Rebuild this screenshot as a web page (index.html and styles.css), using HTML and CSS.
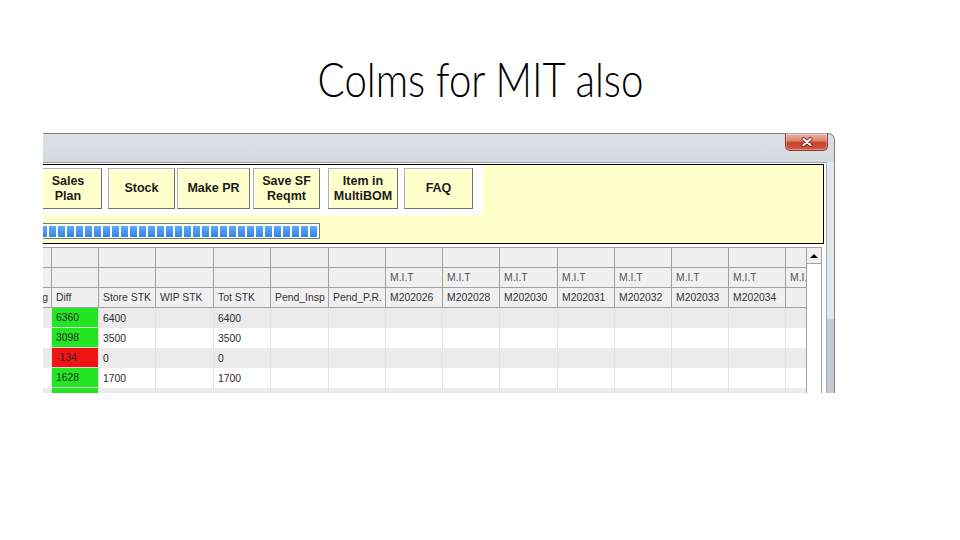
FILE: index.html
```html
<!DOCTYPE html>
<html>
<head>
<meta charset="utf-8">
<title>Colms for MIT also</title>
<link rel="stylesheet" href="styles.css">
</head>
<body>
<div class="slide">
  <h1 class="title"><span class="title-text">Colms for MIT also</span></h1>
  <div class="shot">
    <div class="titlebar">
      <div class="close">
        <svg width="14" height="10" viewBox="0 0 14 10"><path d="M3.5 2 L10.5 8 M10.5 2 L3.5 8" stroke="#7a2a1c" stroke-width="3.8" stroke-linecap="round"/><path d="M3.5 2 L10.5 8 M10.5 2 L3.5 8" stroke="#ffffff" stroke-width="2.1" stroke-linecap="round"/></svg>
      </div>
    </div>
    <div class="winbody">
      <div class="client">
        <div class="panel">
          <div class="btnrow">
            <div class="btn b-sales">Sales<br>Plan</div>
            <div class="btn b-stock">Stock</div>
            <div class="btn b-pr">Make PR</div>
            <div class="btn b-save">Save SF<br>Reqmt</div>
            <div class="btn b-item">Item in<br>MultiBOM</div>
            <div class="btn b-faq">FAQ</div>
          </div>
          <div class="progress">
            <span class="seg"></span><span class="seg"></span><span class="seg"></span><span class="seg"></span><span class="seg"></span>
            <span class="seg"></span><span class="seg"></span><span class="seg"></span><span class="seg"></span><span class="seg"></span>
            <span class="seg"></span><span class="seg"></span><span class="seg"></span><span class="seg"></span><span class="seg"></span>
            <span class="seg"></span><span class="seg"></span><span class="seg"></span><span class="seg"></span><span class="seg"></span>
            <span class="seg"></span><span class="seg"></span><span class="seg"></span><span class="seg"></span><span class="seg"></span>
            <span class="seg"></span><span class="seg"></span><span class="seg"></span><span class="seg"></span><span class="seg"></span>
            <span class="seg"></span>
          </div>
        </div>
        <div class="gridwrap">
          <div class="grid">
            <table>
              <colgroup>
                <col class="w57"><col class="w47"><col class="w57"><col class="w58"><col class="w57"><col class="w58"><col class="w57"><col class="w57"><col class="w57"><col class="w58"><col class="w57"><col class="w57"><col class="w57"><col class="w57"><col class="w57">
              </colgroup>
              <tr class="hd"><td></td><td></td><td></td><td></td><td></td><td></td><td></td><td></td><td></td><td></td><td></td><td></td><td></td><td></td><td></td></tr>
              <tr class="hd"><td></td><td></td><td></td><td></td><td></td><td></td><td></td><td class="mit">M.I.T</td><td class="mit">M.I.T</td><td class="mit">M.I.T</td><td class="mit">M.I.T</td><td class="mit">M.I.T</td><td class="mit">M.I.T</td><td class="mit">M.I.T</td><td class="mit">M.I.T</td></tr>
              <tr class="hd"><td class="lead">Avg</td><td>Diff</td><td>Store STK</td><td>WIP STK</td><td>Tot STK</td><td>Pend_Insp</td><td>Pend_P.R.</td><td>M202026</td><td>M202028</td><td>M202030</td><td>M202031</td><td>M202032</td><td>M202033</td><td>M202034</td><td></td></tr>
              <tr class="alt"><td></td><td class="pos">6360</td><td>6400</td><td></td><td>6400</td><td></td><td></td><td></td><td></td><td></td><td></td><td></td><td></td><td></td><td></td></tr>
              <tr><td></td><td class="pos">3098</td><td>3500</td><td></td><td>3500</td><td></td><td></td><td></td><td></td><td></td><td></td><td></td><td></td><td></td><td></td></tr>
              <tr class="alt"><td></td><td class="neg">-134</td><td>0</td><td></td><td>0</td><td></td><td></td><td></td><td></td><td></td><td></td><td></td><td></td><td></td><td></td></tr>
              <tr><td></td><td class="pos">1628</td><td>1700</td><td></td><td>1700</td><td></td><td></td><td></td><td></td><td></td><td></td><td></td><td></td><td></td><td></td></tr>
              <tr class="alt"><td></td><td class="pos">506</td><td>540</td><td></td><td>540</td><td></td><td></td><td></td><td></td><td></td><td></td><td></td><td></td><td></td><td></td></tr>
            </table>
          </div>
          <div class="vscroll"><div class="vs-up"></div></div>
        </div>
      </div>
      <div class="frame"></div>
    </div>
  </div>
</div>
</body>
</html>
```

FILE: styles.css
```css
* { box-sizing: border-box; }
html, body { margin: 0; padding: 0; background: #fff; }
body {
  width: 960px;
  height: 540px;
  overflow: hidden;
  font-family: "Liberation Sans", Arial, sans-serif;
}

.slide {
  display: flex;
  flex-direction: column;
  height: 540px;
}

/* ---------- slide title ---------- */
.title {
  margin: 0;
  height: 133px;
  padding-top: 51px;
  text-align: center;
  font-family: Lato, "Open Sans", sans-serif;
  font-weight: 300;
  font-size: 47px;
  line-height: 56px;
  color: #000;
}
.title-text {
  display: inline-block;
  transform: scaleX(0.855);
  transform-origin: 50% 50%;
}

/* ---------- window screenshot ---------- */
.shot {
  margin-left: 43px;
  width: 792px;
  height: 260px;
  overflow: hidden;
  display: flex;
  flex-direction: column;
  background: #fff;
}

.titlebar {
  flex: none;
  height: 29px;
  border-top: 1px solid #7b8087;
  border-right: 1px solid #7b8087;
  border-top-right-radius: 7px;
  background: linear-gradient(#dce0e6, #d5dae1);
  display: flex;
  justify-content: flex-end;
  align-items: flex-start;
  padding-right: 6px;
}
.close {
  width: 43px;
  height: 18px;
  margin-top: -1px;
  border: 1px solid #8d3526;
  border-top-color: #a8a8a8;
  border-radius: 0 0 5px 5px;
  background: linear-gradient(#e9b1a3 0%, #dc8571 40%, #c5432d 55%, #cd5b43 100%);
  box-shadow: inset 0 0 0 1px rgba(255, 255, 255, 0.35);
  display: flex;
  align-items: center;
  justify-content: center;
}

.winbody {
  flex: 1;
  min-height: 0;
  display: flex;
}

.client {
  width: 783px;
  flex: none;
  display: flex;
  flex-direction: column;
  border-top: 1px solid #9aa0a6;
  padding-top: 1px;
  background: #fff;
}

.frame {
  width: 9px;
  flex: none;
  border-left: 1px solid #a3a9b0;
  border-right: 1px solid #7d838a;
  background: linear-gradient(#e3e7eb 0, #e3e7eb 157px, #c4cad0 157px);
}

/* ---------- yellow panel ---------- */
.panel {
  flex: none;
  height: 80px;
  margin-right: 2px;
  border: 1px solid #000;
  border-left: none;
  background: #ffffc9;
  display: flex;
  flex-direction: column;
  align-items: flex-start;
}

.btnrow {
  width: 440px;
  height: 50px;
  flex: none;
  background: #fff;
  display: flex;
  align-items: flex-start;
  padding-top: 3px;
}

.btn {
  flex: none;
  height: 41px;
  display: flex;
  align-items: center;
  justify-content: center;
  text-align: center;
  background: #ffffcc;
  border: 1px solid #b0b0b0;
  border-right-color: #707070;
  border-bottom-color: #707070;
  box-shadow: inset 1px 1px 0 #ffffff;
  font: bold 12.5px/15px "Liberation Sans", Arial, sans-serif;
  color: #1b1b1b;
}
.b-sales { width: 68px; margin-left: -9px; }
.b-stock { width: 67px; margin-left: 6px; }
.b-pr    { width: 73px; margin-left: 2px; }
.b-save  { width: 67px; margin-left: 3px; }
.b-item  { width: 70px; margin-left: 8px; }
.b-faq   { width: 69px; margin-left: 6px; }

.progress {
  flex: none;
  margin-top: 8px;
  margin-left: -5px;
  width: 282px;
  height: 16px;
  border: 1px solid #6f7a88;
  padding: 2px 1px 1px;
  display: flex;
  gap: 2px;
  background: #fff;
  overflow: hidden;
}
.seg {
  flex: none;
  width: 7px;
  height: 11px;
  background: linear-gradient(#5eaaf5, #2f85e6);
}

/* ---------- grid ---------- */
.gridwrap {
  flex: 1;
  min-height: 0;
  margin-top: 3px;
  margin-right: 4px;
  display: flex;
}
.grid {
  flex: 1;
  overflow: hidden;
  border-top: 1px solid #a0a0a0;
}

table {
  border-collapse: separate;
  border-spacing: 0;
  table-layout: fixed;
  width: 848px;
  margin-left: -48px;
  font: 10.4px "Liberation Sans", Arial, sans-serif;
  color: #2b2b2b;
}
.w57 { width: 57px; }
.w58 { width: 58px; }
.w47 { width: 47px; }

td {
  height: 20px;
  padding: 0 0 0 4px;
  white-space: nowrap;
  overflow: hidden;
  border-right: 1px solid #e2e2e2;
  background: #fff;
}
.hd td {
  background: #f0f0f0;
  border-right-color: #a0a0a0;
  border-bottom: 1px solid #a0a0a0;
  color: #333;
}
.hd td.mit { color: #555; }
.hd td.lead { text-align: right; padding: 0 3px 0 0; }

.alt td { background: #ebebeb; }
tr td.pos { background: #22e622; border-bottom: 1px solid #d5d5d5; }
tr td.neg { background: #f01414; border-bottom: 1px solid #d5d5d5; }

.vscroll {
  width: 16px;
  flex: none;
  border-top: 1px solid #a0a0a0;
  border-left: 1px solid #a0a0a0;
  border-right: 1px solid #a0a0a0;
  background: #fff;
}
.vs-up {
  height: 16px;
  background: #f0f0f0;
  border-bottom: 1px solid #a0a0a0;
  display: flex;
  align-items: center;
  justify-content: center;
}
.vs-up::before {
  content: "";
  border-left: 4px solid transparent;
  border-right: 4px solid transparent;
  border-bottom: 4px solid #000;
}
```
